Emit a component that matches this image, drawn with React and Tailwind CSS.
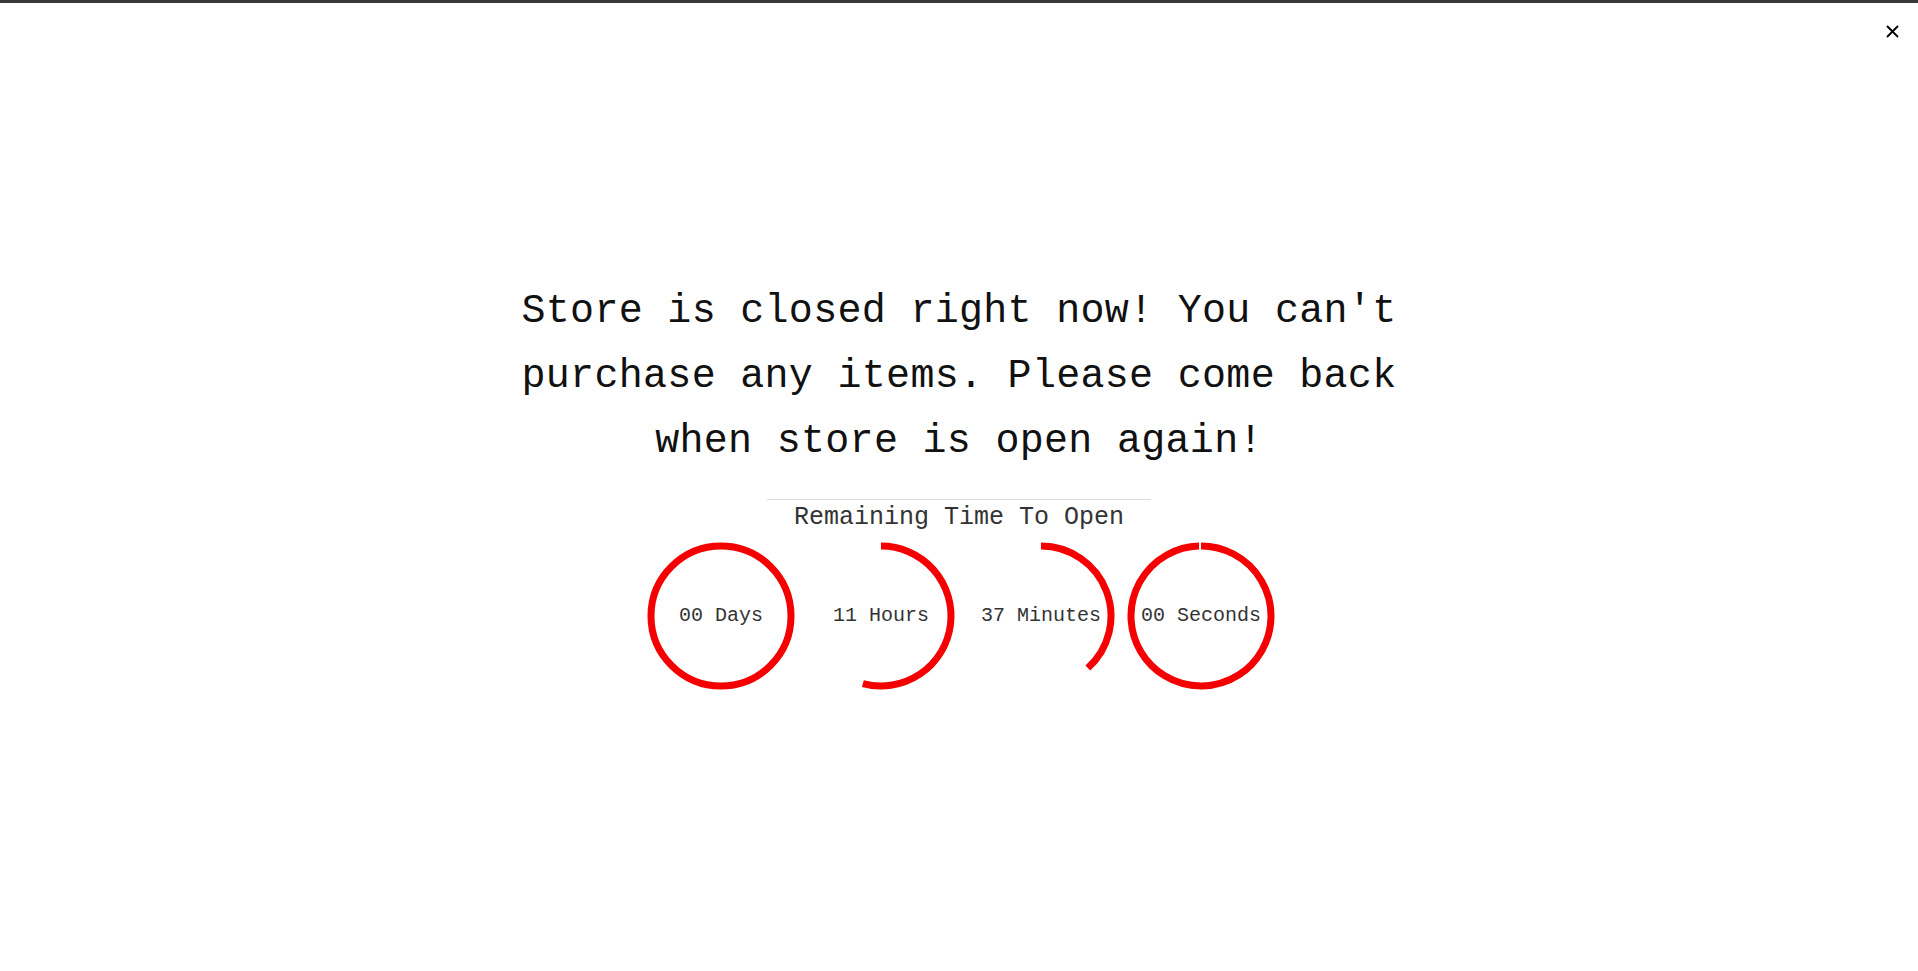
import React from "react";

function polar(cx, cy, r, deg) {
  const a = ((deg - 90) * Math.PI) / 180;
  return [cx + r * Math.cos(a), cy + r * Math.sin(a)];
}

function arcPath(cx, cy, r, start, end) {
  const [sx, sy] = polar(cx, cy, r, end);
  const [ex, ey] = polar(cx, cy, r, start);
  const large = end - start <= 180 ? 0 : 1;
  return `M ${sx} ${sy} A ${r} ${r} 0 ${large} 0 ${ex} ${ey}`;
}

function Ring({ angle, label, full }) {
  return (
    <div className="relative w-[160px] h-[150px] flex items-center justify-center">
      <svg width="150" height="150" viewBox="0 0 150 150" className="absolute left-[5px] top-0">
        {full ? (
          <circle cx="75" cy="75" r="70" fill="none" stroke="#f40000" strokeWidth="7" />
        ) : (
          <path d={arcPath(75, 75, 70, 0, angle)} fill="none" stroke="#f40000" strokeWidth="7" />
        )}
      </svg>
      <span className="relative text-[20px] leading-none text-[#333] whitespace-pre" style={{ fontFamily: '"Liberation Mono", "Courier New", monospace' }}>
        {label}
      </span>
    </div>
  );
}

export default function App() {
  return (
    <div
      className="relative h-[971px] w-full bg-white border-t-[3px] border-[#35393c] overflow-hidden"
      style={{ fontFamily: '"Liberation Mono", "Courier New", monospace' }}
    >
      <button className="absolute right-[19px] top-[21px] w-[14px] h-[14px] flex items-center justify-center">
        <svg width="13" height="13" viewBox="0 0 13 13">
          <path d="M1 1 L12 12 M12 1 L1 12" stroke="#000" strokeWidth="1.8" fill="none" />
        </svg>
      </button>

      <div className="pt-[276px] flex flex-col items-center">
        <h1 className="max-w-[900px] text-center text-[40px] leading-[65px] font-normal text-[#111] tracking-[0.3px]">
          Store is closed right now! You can't purchase any items. Please come back when store is open again!
        </h1>
        <div className="mt-[25px] w-[20%] h-px bg-[#dcdcdc]" />
        <div className="text-[25px] leading-[36px] text-[#333]">Remaining Time To Open</div>
        <div className="mt-[5px] flex pl-[4px]">
          <Ring full label="00 Days" />
          <Ring angle={195} label="11 Hours" />
          <Ring angle={138} label="37 Minutes" />
          <Ring angle={358.4} label="00 Seconds" />
        </div>
      </div>
    </div>
  );
}
